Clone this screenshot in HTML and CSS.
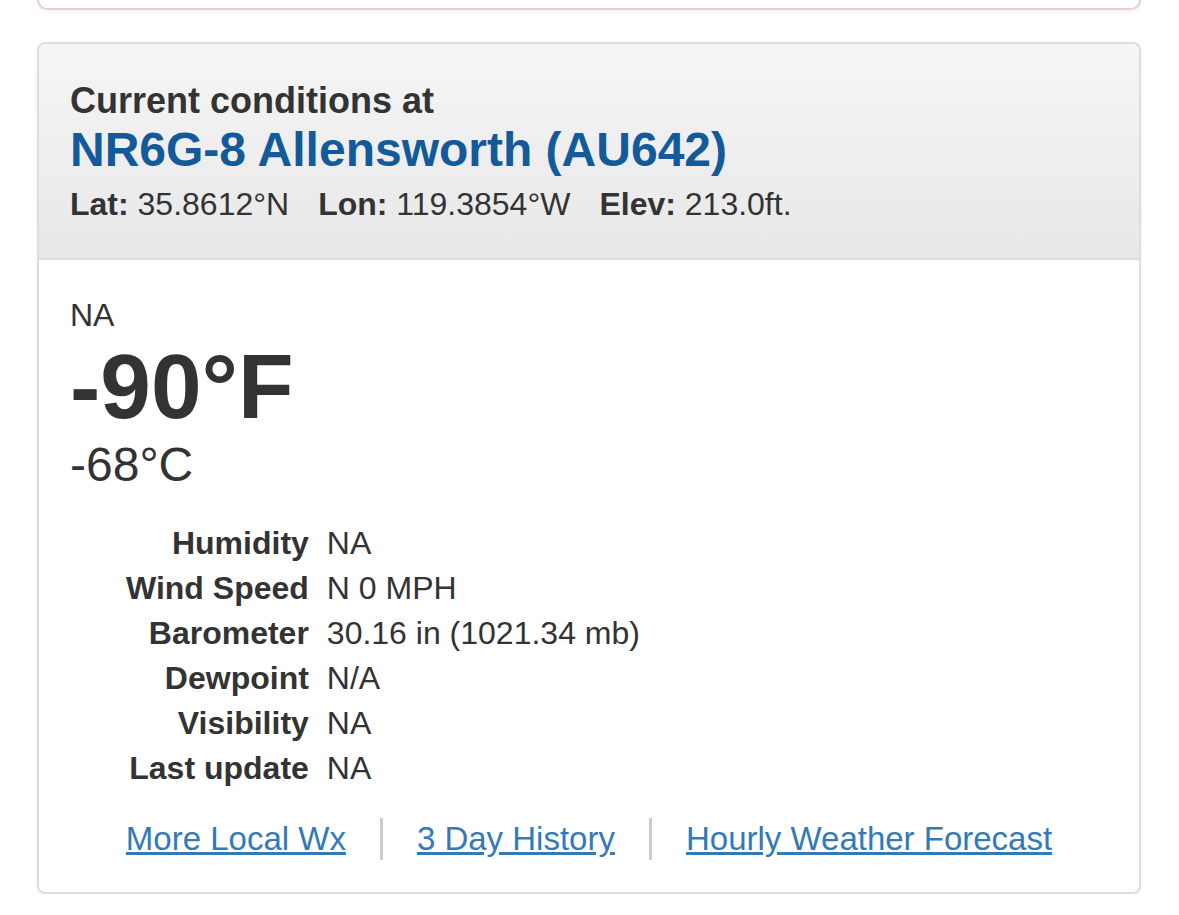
FILE: index.html
```html
<!DOCTYPE html>
<html lang="en">
<head>
    <meta charset="UTF-8">
    <title>Current conditions</title>
    <link rel="stylesheet" href="styles.css">
</head>
<body>
    <div class="page">
        <div class="panel-prev"></div>

        <div class="panel">
            <div class="panel-heading">
                <h4 class="panel-title">Current conditions at</h4>
                <h3 class="station"><a href="#">NR6G-8 Allensworth (AU642)</a></h3>
                <p class="smallTxt">
                    <span class="coord"><b>Lat:</b> 35.8612°N</span>
                    <span class="coord"><b>Lon:</b> 119.3854°W</span>
                    <span class="coord"><b>Elev:</b> 213.0ft.</span>
                </p>
            </div>
            <div class="panel-body">
                <p class="summary">NA</p>
                <p class="temp-f">-90°F</p>
                <p class="temp-c">-68°C</p>

                <table class="details">
                    <tr><th>Humidity</th><td>NA</td></tr>
                    <tr><th>Wind Speed</th><td>N 0 MPH</td></tr>
                    <tr><th>Barometer</th><td>30.16 in (1021.34 mb)</td></tr>
                    <tr><th>Dewpoint</th><td>N/A</td></tr>
                    <tr><th>Visibility</th><td>NA</td></tr>
                    <tr><th>Last update</th><td>NA</td></tr>
                </table>

                <ul class="links">
                    <li><a href="#">More Local Wx</a></li>
                    <li><a href="#">3 Day History</a></li>
                    <li><a href="#">Hourly Weather Forecast</a></li>
                </ul>
            </div>
        </div>
    </div>
</body>
</html>
```

FILE: styles.css
```css
*{
    margin: 0;
    padding: 0;
    list-style: none;
    box-sizing: border-box;
}
body{
    background: #fff;
    color: #333;
    font-family: "Liberation Sans", Arial, Helvetica, sans-serif;
    font-size: 32px;
}
.page{
    padding: 0 38px 0 37px;
}
/* bottom of the alert panel above, scrolled mostly out of view */
.panel-prev{
    height: 10px;
    border: 2px solid #ebccd1;
    border-top: none;
    border-radius: 0 0 10px 10px;
    box-shadow: 0 2px 4px rgba(0,0,0,.05);
}
.panel{
    margin-top: 32px;
    border: 2px solid #ddd;
    border-radius: 8px;
    box-shadow: 0 2px 4px rgba(0,0,0,.06);
    overflow: hidden;
}
.panel-heading{
    padding: 37px 31px 34px;
    background: linear-gradient(to bottom, #f5f5f5 0%, #e8e8e8 100%);
    border-bottom: 2px solid #ddd;
}
.panel-title{
    font-size: 36px;
    line-height: 40px;
    font-weight: bold;
}
.station{
    margin-top: 1px;
    font-size: 48px;
    line-height: 56px;
    font-weight: bold;
}
.station a{
    color: #135a9a;
    text-decoration: none;
}
.smallTxt{
    margin-top: 6px;
    font-size: 32px;
    line-height: 40px;
    display: flex;
    gap: 29px;
}
.panel-body{
    padding: 35px 31px 32px;
}
.summary{
    line-height: 40px;
}
.temp-f{
    margin-top: 2px;
    font-size: 91px;
    line-height: 100px;
    font-weight: bold;
}
.temp-c{
    font-size: 48px;
    line-height: 56px;
}
.details{
    margin: 28px 0 0 56px;
    border-collapse: collapse;
}
.details th,
.details td{
    height: 45px;
    line-height: 45px;
    padding: 0;
    vertical-align: top;
}
.details th{
    text-align: right;
    padding-right: 18px;
    white-space: nowrap;
}
.details td{
    text-align: left;
}
.links{
    margin-top: 27px;
    display: flex;
    justify-content: center;
    font-size: 33px;
}
.links li{
    line-height: 42px;
    padding: 0 34px;
}
.links li + li{
    border-left: 3px solid #ccc;
}
.links a{
    color: #337ab7;
    text-decoration: underline;
}
```
